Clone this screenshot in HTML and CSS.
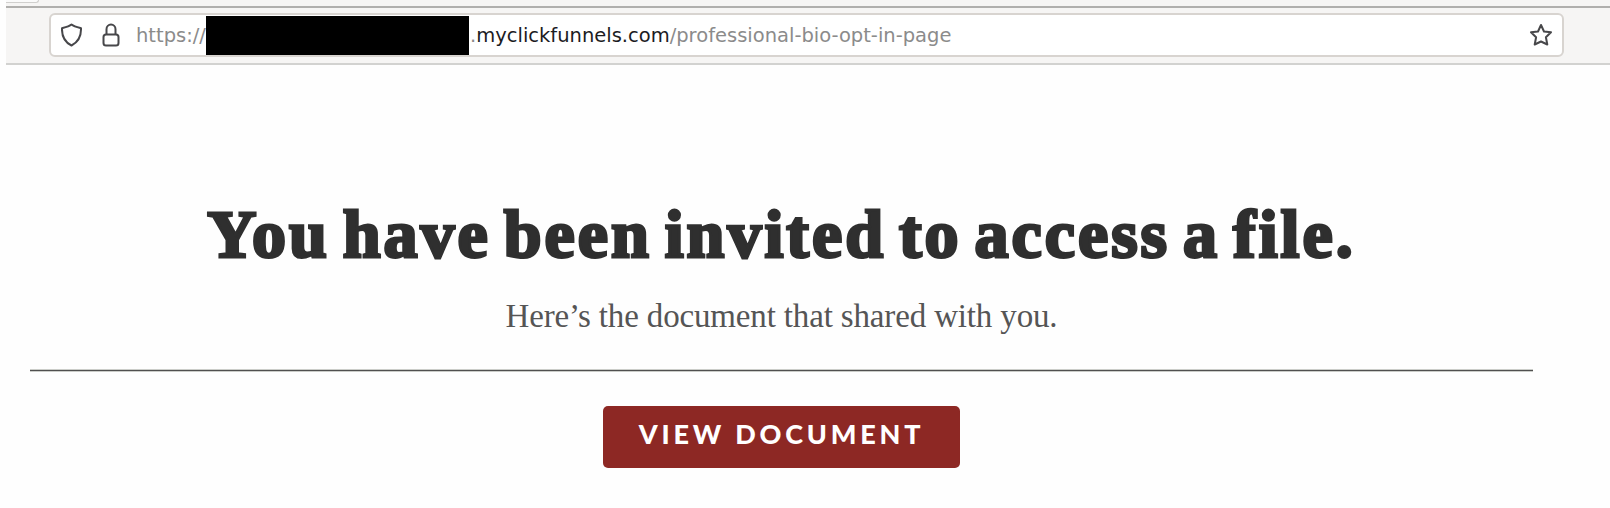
FILE: index.html
```html
<!DOCTYPE html>
<html lang="en">

<head>
    <meta charset="UTF-8">
    <meta name="viewport" content="width=device-width, initial-scale=1.0">
    <title>Professional Bio</title>
    <link rel="stylesheet" href="styles.css">
</head>

<body>
<div class="browser">
    <div class="tabs"><div class="tab"></div></div>
    <div class="toolbar">
        <div class="urlbar">
            <svg class="icon shield" viewBox="0 0 22 24">
                <path d="M10.500 1.500 C8 3.500 4.500 4.300 1 5.200 C0.700 13 3.500 19 10.500 22.500 C17.500 19 20.300 13 20 5.200 C16.500 4.300 13 3.500 10.500 1.500 Z"/>
            </svg>
            <svg class="icon lock" viewBox="0 0 18 24">
                <rect x="1.500" y="11.500" width="15" height="11" rx="2.500"/>
                <path d="M4.500 11.500 V6.200 A4.500 4.700 0 0 1 13.500 6.200 V11.500"/>
            </svg>
            <span class="scheme">https://</span>
            <span class="hidden-name"></span>
            <span class="address">.<b>myclickfunnels.com</b><span class="path">/professional-bio-opt-in-page</span></span>
            <svg class="icon star" viewBox="0 0 24 24">
                <path d="M12 2 L15 8.500 L22 9.300 L16.900 14.200 L18.300 21.500 L12 18.500 L5.700 21.500 L7.100 14.200 L2 9.300 L9 8.500 Z"/>
            </svg>
        </div>
    </div>
</div>

<div class="content">
    <h1 class="title">You have been invited to access a file.</h1>
    <p class="subtitle">Here’s the document that shared with you.</p>
    <div class="line"></div>
    <a class="view-btn">VIEW DOCUMENT</a>
</div>
</body>

</html>
```
FILE: styles.css
```css
*{
    box-sizing: border-box;
}
body{
    margin: 0;
    height: 508px;
    overflow: hidden;
    background-color: #fefefe;
}
.browser{
    margin-left: 6px;
    font-family: "DejaVu Sans", sans-serif;
}
.tabs{
    height: 8px;
    background-color: #f6f5f4;
    border-bottom: 2px solid #b0afad;
}
.tab{
    width: 33px;
    height: 3px;
    background-color: #fafafa;
    border: 1px solid #d0cfcd;
    border-width: 0 1px 1px 0;
    border-radius: 0 0 5px 0;
}
.toolbar{
    height: 57px;
    padding: 5px 46px 0 43px;
    background-color: #f6f5f4;
    border-bottom: 2px solid #d2d2d0;
}
.urlbar{
    display: flex;
    align-items: center;
    height: 44px;
    padding: 0 9px 0 10px;
    background-color: #fff;
    border: 2px solid #d8d4d0;
    border-radius: 6px;
    font-size: 19.5px;
    color: #8b8b8b;
    white-space: nowrap;
}
.icon{
    flex: none;
    fill: none;
    stroke: #47474a;
    stroke-width: 2;
    stroke-linejoin: round;
}
.shield{
    width: 22px;
    height: 24px;
}
.lock{
    width: 18px;
    height: 24px;
    margin-left: 19px;
}
.scheme{
    width: 70px;
    margin-left: 16px;
    padding-top: 1px;
}
.hidden-name{
    width: 263px;
    height: 39px;
    background-color: #000;
}
.address{
    margin-left: 1px;
    padding-top: 1px;
}
.address b{
    font-weight: normal;
    color: #1c1c1f;
}
.star{
    width: 24px;
    height: 24px;
    margin-left: auto;
}
.content{
    display: flex;
    flex-direction: column;
    align-items: center;
    width: 1503px;
    margin-left: 30px;
    padding-top: 129px;
}
.title{
    margin: 0;
    font: bold 68px/80px "Liberation Serif", serif;
    letter-spacing: 3px;
    word-spacing: -7px;
    color: #2f2f2f;
    -webkit-text-stroke: 3px #2f2f2f;
    white-space: nowrap;
}
.subtitle{
    margin: 22px 0 0;
    font: 33px/40px "Liberation Serif", serif;
    letter-spacing: -0.15px;
    color: #555;
    white-space: nowrap;
}
.line{
    width: 100%;
    height: 3px;
    margin-top: 33px;
    background-color: #50504f;
    border: 1px solid #cbcdc9;
    border-width: 1px 0;
}
.view-btn{
    width: 357px;
    height: 62px;
    margin-top: 34px;
    border-radius: 5px;
    background-color: #8d2824;
    color: #fff;
    font: 900 27px/56px Lato, sans-serif;
    letter-spacing: 3.8px;
    text-align: center;
}
```
